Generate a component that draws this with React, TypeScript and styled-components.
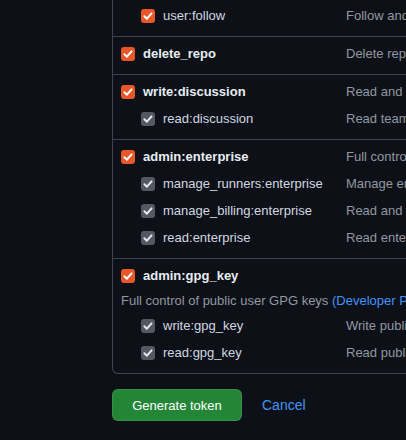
import React from "react";
import styled, { createGlobalStyle } from "styled-components";

const Global = createGlobalStyle`
  html, body { margin: 0; padding: 0; background: #0d1117; overflow: hidden; }
  body { font-family: "Liberation Sans", Arial, sans-serif; }
`;

const Page = styled.div`
  width: 406px;
  height: 440px;
  overflow: hidden;
  background: #0d1117;
  padding-left: 112px;
  box-sizing: border-box;
`;

const Panel = styled.div`
  width: 720px;
  border: 1px solid #3d444d;
  border-top: none;
  border-radius: 0 0 6px 6px;
`;

const Group = styled.div<{ $cut?: boolean }>`
  padding: ${(p) => (p.$cut ? "6px" : "7px")} 8px 10px;
  border-top: ${(p) => (p.$cut ? "none" : "1px solid #3d444d")};
`;

const Row = styled.div<{ $child?: boolean; $gap?: number }>`
  display: flex;
  align-items: center;
  height: 20px;
  margin-top: ${(p) => (p.$gap ?? 0)}px;
  padding-left: ${(p) => (p.$child ? 20 : 0)}px;
  white-space: nowrap;
`;

const NameCell = styled.div<{ $child?: boolean }>`
  display: flex;
  align-items: center;
  gap: 8px;
  width: ${(p) => (p.$child ? 205 : 225)}px;
  flex: none;
`;

const Name = styled.span<{ $bold?: boolean }>`
  font-size: 13px;
  line-height: 20px;
  font-weight: ${(p) => (p.$bold ? 700 : 400)};
  color: ${(p) => (p.$bold ? "#e6edf3" : "#d1d7e0")};
`;

const Desc = styled.span`
  font-size: 13px;
  line-height: 20px;
  color: #9198a1;
`;

const Note = styled.p`
  margin: 5px 0 0;
  font-size: 13px;
  line-height: 20px;
  color: #9198a1;
  white-space: nowrap;
`;

const Link = styled.a`
  color: #4493f8;
  text-decoration: none;
`;

const Box = styled.span<{ $muted?: boolean }>`
  width: 14px;
  height: 14px;
  border-radius: 3px;
  flex: none;
  display: inline-flex;
  align-items: center;
  justify-content: center;
  background: ${(p) => (p.$muted ? "#545861" : "#e8572a")};
`;

const Actions = styled.div`
  display: flex;
  align-items: center;
  gap: 20px;
  margin-top: 15px;
`;

const PrimaryButton = styled.button`
  height: 32px;
  padding: 0 16px;
  border: 1px solid rgba(240, 246, 252, 0.1);
  border-radius: 6px;
  background: #238636;
  color: #ffffff;
  font-family: "Liberation Sans", Arial, sans-serif;
  font-size: 13px;
  font-weight: 500;
  width: 130px;
`;

const CancelLink = styled.a`
  color: #4493f8;
  font-size: 14px;
  text-decoration: none;
`;

const Check = ({ muted }: { muted?: boolean }) => (
  <Box $muted={muted}>
    <svg width="14" height="14" viewBox="0 0 14 14">
      <path
        d="M3.4 7.3 L5.9 9.7 L10.6 4.4"
        fill="none"
        stroke={muted ? "#e6e8eb" : "#ffffff"}
        strokeWidth="2"
        strokeLinecap="round"
        strokeLinejoin="round"
      />
    </svg>
  </Box>
);

type Scope = { name: string; desc: string; child?: boolean; active?: boolean };

const ScopeRow = ({ s, gap }: { s: Scope; gap?: number }) => (
  <Row $child={s.child} $gap={gap}>
    <NameCell $child={s.child}>
      <Check muted={s.child && !s.active} />
      <Name $bold={!s.child}>{s.name}</Name>
    </NameCell>
    <Desc>{s.desc}</Desc>
  </Row>
);

const groups: Scope[][] = [
  [{ name: "delete_repo", desc: "Delete repositories" }],
  [
    { name: "write:discussion", desc: "Read and write team discussions" },
    { name: "read:discussion", desc: "Read team discussions", child: true },
  ],
  [
    { name: "admin:enterprise", desc: "Full control of enterprises" },
    { name: "manage_runners:enterprise", desc: "Manage enterprise runners and runner groups", child: true },
    { name: "manage_billing:enterprise", desc: "Read and write enterprise billing data", child: true },
    { name: "read:enterprise", desc: "Read enterprise profile data", child: true },
  ],
];

export default function App() {
  return (
    <Page>
      <Global />
      <Panel>
        <Group $cut>
          <ScopeRow s={{ name: "user:follow", desc: "Follow and unfollow users", child: true, active: true }} />
        </Group>
        {groups.map((g, i) => (
          <Group key={i}>
            {g.map((s, j) => (
              <ScopeRow key={s.name} s={s} gap={j === 0 ? 0 : 7} />
            ))}
          </Group>
        ))}
        <Group>
          <Row>
            <NameCell>
              <Check />
              <Name $bold>admin:gpg_key</Name>
            </NameCell>
          </Row>
          <Note>
            Full control of public user GPG keys <Link href="#">(Developer Preview)</Link>
          </Note>
          <ScopeRow s={{ name: "write:gpg_key", desc: "Write public user GPG keys", child: true }} gap={5} />
          <ScopeRow s={{ name: "read:gpg_key", desc: "Read public user GPG keys", child: true }} gap={7} />
        </Group>
      </Panel>
      <Actions>
        <PrimaryButton>Generate token</PrimaryButton>
        <CancelLink href="#">Cancel</CancelLink>
      </Actions>
    </Page>
  );
}
